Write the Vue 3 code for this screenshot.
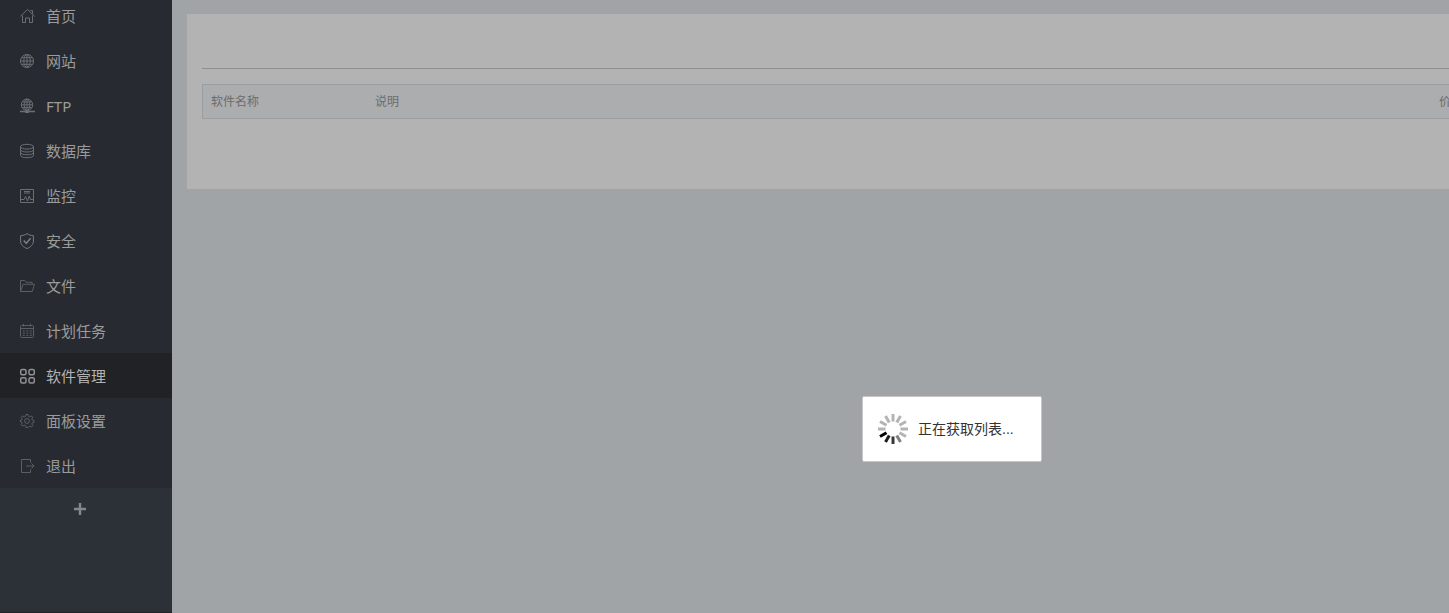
<script setup>
const menu = [
  { name: '首页', icon: 'home' },
  { name: '网站', icon: 'globe' },
  { name: 'FTP', icon: 'ftp' },
  { name: '数据库', icon: 'database' },
  { name: '监控', icon: 'monitor' },
  { name: '安全', icon: 'shield' },
  { name: '文件', icon: 'folder' },
  { name: '计划任务', icon: 'calendar' },
  { name: '软件管理', icon: 'apps', active: true },
  { name: '面板设置', icon: 'gear' },
  { name: '退出', icon: 'exit' }
]

const spokes = ['#b4b4b4', '#b4b4b4', '#b4b4b4', '#b4b4b4', '#b4b4b4', '#808080', '#383838', '#1c1c1c', '#000000', '#b4b4b4', '#b4b4b4', '#b4b4b4']
</script>

<template>
  <div class="page">
    <aside class="sidebar">
      <nav>
        <ul class="menu">
          <li v-for="item in menu" :key="item.name">
            <a href="#" class="item" :class="{ active: item.active }">
              <svg class="icon" :class="item.icon" viewBox="0 0 16 16" aria-hidden="true">
                <template v-if="item.icon === 'home'">
                  <path d="M.4 8.3 7.5 1.4l7.1 6.9M10.5 2.5h2v3.3M2.500 7.500v7H5.500v-4.500h4v4.500h3v-7" />
                </template>
                <template v-else-if="item.icon === 'globe'">
                  <circle cx="7" cy="8" r="6.5" />
                  <ellipse cx="7" cy="8" rx="3.2" ry="6.5" />
                  <path d="M7 1.5v13M.5 8h13M1.5 4.7h11M1.5 11.3h11" />
                </template>
                <template v-else-if="item.icon === 'ftp'">
                  <circle cx="7" cy="6.8" r="5.7" />
                  <ellipse cx="7" cy="6.8" rx="2.8" ry="5.7" />
                  <path d="M7 1.1v12M1.3 6.8h11.4M2.3 4h9.4M2.3 9.6h9.4" />
                  <path class="heavy" d="M0 13.5h15M5 14.2h4" />
                </template>
                <template v-else-if="item.icon === 'database'">
                  <ellipse cx="7" cy="3.7" rx="6.5" ry="2.4" />
                  <path d="M.5 3.7v8.6c0 3.2 13 3.2 13 0V3.7M.5 6.6c0 3.2 13 3.2 13 0M.5 9.4c0 3.2 13 3.2 13 0" />
                </template>
                <template v-else-if="item.icon === 'monitor'">
                  <path d="M.5 1.5h13v13H.5zM4 3.5h6M4 5h6M1 11.5h3l1.5-3 2 4.5 1.7-5 1.3 3.5H13" />
                </template>
                <template v-else-if="item.icon === 'shield'">
                  <path d="M7 .6C5 2 3 2.5.6 2.7V8c0 3.500 2.500 6 6.400 7.500C10.900 14 13.400 11.500 13.400 8V2.700C11 2.500 9 2 7 .6z" />
                  <path class="check" d="m3.700 7.500 2.500 2.800 4.400-5" />
                </template>
                <template v-else-if="item.icon === 'folder'">
                  <path d="M.5 13.500v-11h4.300l1.300 1.800h6v2M.5 13.500 3 6.300h11.500l-2.200 7.200z" />
                </template>
                <template v-else-if="item.icon === 'calendar'">
                  <rect x=".5" y="2.500" width="13" height="12" rx="1" />
                  <path d="M.5 5.500h13M3.500.8v2.700M10.500.8v2.700" />
                  <path class="dots" d="M2.800 8h9M2.800 10.200h9M2.800 12.400h9" />
                </template>
                <template v-else-if="item.icon === 'apps'">
                  <rect x=".7" y="1.500" width="5.300" height="5.300" rx="1.500" />
                  <rect x="9" y="1.500" width="5.300" height="5.300" rx="1.500" />
                  <rect x=".7" y="9.800" width="5.300" height="5.300" rx="1.500" />
                  <rect x="9" y="9.800" width="5.300" height="5.300" rx="1.500" />
                </template>
                <template v-else-if="item.icon === 'gear'">
                  <circle cx="7" cy="8" r="2.400" />
                  <path d="M6 1.500h2l.5 1.900 1.200.5 1.700-1 1.400 1.400-1 1.700.5 1.100 1.700.5v1.800l-1.700.5-.5 1.100 1 1.700-1.400 1.400-1.700-1-1.200.5L8 14.500H6l-.5-1.900-1.200-.5-1.700 1-1.400-1.400 1-1.700L1.700 8.900 0 8.400V7.600l1.700-.5.500-1.100-1-1.700 1.400-1.400 1.700 1 1.200-.5z" />
                </template>
                <template v-else>
                  <path d="M10.500 4.500v-3H1.500v13h9v-3M6 8h8M11.500 5.500 14 8l-2.500 2.500" />
                </template>
              </svg>
              <span>{{ item.name }}</span>
            </a>
          </li>
        </ul>
      </nav>
      <button class="add" type="button" aria-label="添加">
        <svg viewBox="0 0 14 14" aria-hidden="true"><path d="M7 1v12M1 7h12" /></svg>
      </button>
    </aside>

    <main class="content">
      <section class="card">
        <div class="tabs"></div>
        <table class="software">
          <thead>
            <tr>
              <th class="col-name">软件名称</th>
              <th>说明</th>
              <th class="col-price">价格</th>
            </tr>
          </thead>
        </table>
      </section>
    </main>

    <div class="loading" role="status">
      <svg class="spinner" viewBox="0 0 32 32" aria-hidden="true">
        <path
          v-for="(color, i) in spokes"
          :key="i"
          d="M16 1v7.500"
          :stroke="color"
          :transform="`rotate(${i * 30} 16 16)`"
        />
      </svg>
      <span>正在获取列表...</span>
    </div>
  </div>
</template>

<style>
body {
  margin: 0;
  background: #a0a4a7;
}
</style>

<style scoped>
.page {
  position: relative;
  display: flex;
  min-height: 100vh;
  overflow: hidden;
  box-sizing: border-box;
  font-family: "Liberation Sans", "Noto Sans CJK SC", sans-serif;
  background: #a0a4a7;
}

.sidebar {
  flex: 0 0 172px;
  box-sizing: border-box;
  background: #2c3037;
  border-bottom: 1px solid #202327;
}

.menu {
  margin: -7px 0 0;
  padding: 0;
  list-style: none;
  background: #272b31;
}

.item {
  display: flex;
  align-items: center;
  gap: 10px;
  height: 45px;
  padding-left: 20px;
  box-sizing: border-box;
  font-family: "Noto Sans", "Noto Sans CJK SC", sans-serif;
  font-size: 15px;
  line-height: 20px;
  color: #9b9b9b;
  text-decoration: none;
}

.item.active {
  color: #b3b3b3;
  background: #202226;
}

.icon {
  width: 16px;
  height: 16px;
  overflow: visible;
  fill: none;
  stroke: #6c6f72;
  stroke-width: 1;
}

.heavy {
  stroke-width: 1.5;
}

.check {
  stroke-width: 1.5;
}

.dots {
  stroke-dasharray: 2 1.5;
}

.folder,
.calendar,
.exit,
.gear {
  stroke: #5b5e62;
}

.shield {
  stroke: #7a7d80;
}

.apps {
  stroke: #919294;
  stroke-width: 1.5;
}

.add {
  display: flex;
  justify-content: center;
  align-items: center;
  width: 160px;
  height: 42px;
  padding: 0;
  border: 0;
  background: none;
}

.add svg {
  width: 14px;
  height: 14px;
  stroke: #85878a;
  stroke-width: 2.5;
}

.content {
  flex: 1;
  min-width: 0;
  padding: 14px 0 0 15px;
}

.card {
  width: calc(100% + 80px);
  height: 175px;
  padding: 0 15px;
  box-sizing: border-box;
  background: #b3b3b3;
}

.tabs {
  height: 54px;
  margin-bottom: 15px;
  border-bottom: 1px solid #8f8f8f;
}

.software {
  width: 100%;
  table-layout: fixed;
  border-spacing: 0;
  border: 1px solid #9b9ea1;
  background: #abadaf;
}

.software th {
  height: 33px;
  padding: 0 8px;
  font-size: 12px;
  font-weight: 400;
  line-height: 18px;
  text-align: left;
  color: #6c6c6c;
}

.software .col-name {
  width: 148px;
}

.software .col-price {
  width: 66px;
}

.loading {
  position: absolute;
  top: 396px;
  left: 862px;
  display: flex;
  align-items: center;
  gap: 9px;
  width: 180px;
  height: 66px;
  padding-left: 14px;
  box-sizing: border-box;
  border: 1px solid #c6c6c6;
  border-radius: 2px;
  background: #fff;
  font-size: 14px;
  line-height: 20px;
  color: #333;
}

.spinner {
  width: 32px;
  height: 32px;
  fill: none;
  stroke-width: 3;
}
</style>
